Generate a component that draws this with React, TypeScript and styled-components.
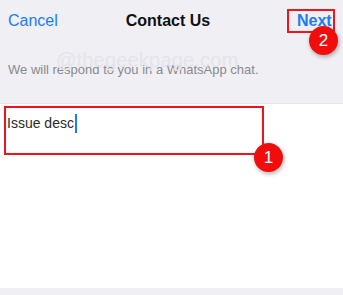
import React from "react";
import styled, { createGlobalStyle } from "styled-components";

const Global = createGlobalStyle`
  html, body { margin: 0; padding: 0; background: #efeff4; }
  body { font-family: "Liberation Sans", Arial, sans-serif; -webkit-font-smoothing: antialiased; }
`;

const Page = styled.div`
  position: relative;
  width: 343px;
  height: 295px;
  background: #efeff4;
  display: flex;
  flex-direction: column;
  overflow: hidden;
`;

const NavBar = styled.div`
  height: 41px;
  display: grid;
  grid-template-columns: 1fr auto 1fr;
  align-items: center;
  padding: 0 10px 0 8px;
  font-size: 16px;
`;

const NavLink = styled.span<{ $bold?: boolean }>`
  color: #1c7cf4;
  font-weight: ${(p) => (p.$bold ? 700 : 400)};
`;

const Title = styled.span`
  color: #111;
  font-weight: 700;
  margin-right: 5px;
`;

const RightSlot = styled.div`
  justify-self: end;
`;

const Highlight = styled.div`
  position: relative;
  display: inline-flex;
  align-items: center;
  border: 2px solid #f2141c;
`;

const NextBox = styled(Highlight)`
  width: 36px;
  height: 20px;
  padding-left: 8px;
  box-sizing: content-box;
  margin-right: -2px;
  margin-top: 1px;
`;

const Badge = styled.div<{ $left: number; $top: number }>`
  position: absolute;
  left: ${(p) => p.$left}px;
  top: ${(p) => p.$top}px;
  width: 29px;
  height: 29px;
  border-radius: 50%;
  background: #f20d0d;
  color: #fff;
  font-size: 17px;
  display: flex;
  align-items: center;
  justify-content: center;
  box-shadow: 1px 2px 4px rgba(0, 0, 0, 0.3);
  z-index: 2;
`;

const Note = styled.p`
  margin: 0;
  padding: 21px 8px 25px;
  font-size: 13px;
  line-height: 16px;
  color: #8a8a8f;
`;

const Watermark = styled.div`
  position: absolute;
  left: 56px;
  top: 49px;
  font-size: 20px;
  color: #e4e4ea;
  letter-spacing: 0.2px;
  pointer-events: none;
`;

const Sheet = styled.div`
  height: 185px;
  background: #fff;
  border-top: 1px solid #e6e6eb;
  box-sizing: border-box;
  padding: 2px 4px 0;
`;

const InputBox = styled(Highlight)`
  display: block;
  width: 260px;
  height: 49px;
  box-sizing: border-box;
  padding: 5px 0 0 1px;
  font-size: 14px;
  line-height: 20px;
  color: #2a2a2a;
`;

const Caret = styled.span`
  display: inline-block;
  width: 2px;
  height: 19px;
  background: #1c7cf4;
  vertical-align: -5px;
  margin-left: 1px;
`;

export default function App() {
  return (
    <Page>
      <Global />
      <Watermark>@thegeekpage.com</Watermark>
      <NavBar>
        <div>
          <NavLink>Cancel</NavLink>
        </div>
        <Title>Contact Us</Title>
        <RightSlot>
          <NextBox>
            <NavLink $bold>Next</NavLink>
            <Badge $left={20} $top={15}>2</Badge>
          </NextBox>
        </RightSlot>
      </NavBar>
      <Note>We will respond to you in a WhatsApp chat.</Note>
      <Sheet>
        <InputBox>
          Issue desc<Caret />
          <Badge $left={248} $top={35}>1</Badge>
        </InputBox>
      </Sheet>
    </Page>
  );
}
